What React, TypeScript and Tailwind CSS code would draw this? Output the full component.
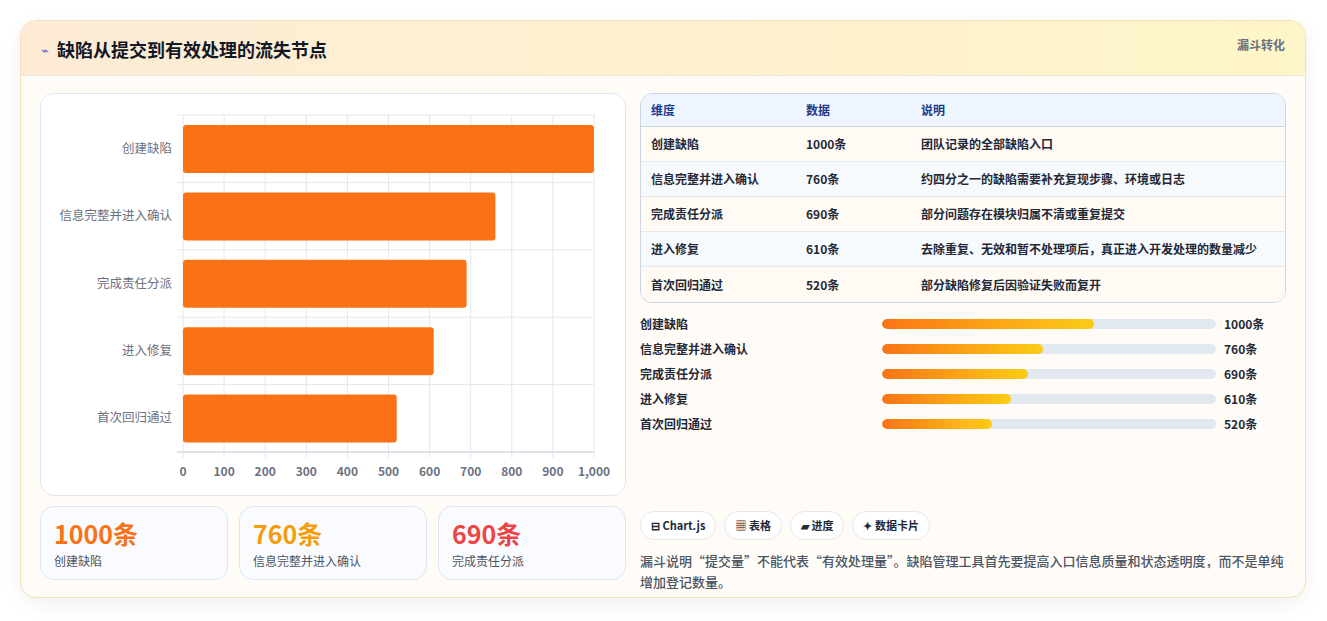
import React from 'react';

const rows = [
  { name: '创建缺陷', value: 1000, note: '团队记录的全部缺陷入口' },
  { name: '信息完整并进入确认', value: 760, note: '约四分之一的缺陷需要补充复现步骤、环境或日志' },
  { name: '完成责任分派', value: 690, note: '部分问题存在模块归属不清或重复提交' },
  { name: '进入修复', value: 610, note: '去除重复、无效和暂不处理项后，真正进入开发处理的数量减少' },
  { name: '首次回归通过', value: 520, note: '部分缺陷修复后因验证失败而复开' },
];

const font = { fontFamily: '"Noto Sans CJK SC", "Noto Sans", sans-serif' };

const Chart: React.FC = () => {
  const x0 = 142, w = 411, y0 = 21, h = 337, band = h / 5;
  return (
    <svg width="584" height="401" className="block">
      {Array.from({ length: 11 }).map((_, i) => (
        <g key={i}>
          <line x1={x0 + (w * i) / 10} x2={x0 + (w * i) / 10} y1={y0} y2={y0 + h + 6} stroke="#e5e7eb" />
          <text x={x0 + (w * i) / 10} y={382} textAnchor="middle" fontSize="12" fontWeight="600" fill="#6b7280">
            {i === 10 ? '1,000' : i * 100}
          </text>
        </g>
      ))}
      {Array.from({ length: 6 }).map((_, i) => (
        <line key={i} x1={x0 - 6} x2={x0 + w} y1={y0 + band * i} y2={y0 + band * i} stroke="#e5e7eb" />
      ))}
      <line x1={x0 - 6} x2={x0 + w} y1={y0 + h} y2={y0 + h} stroke="#cbd5e1" />
      {rows.map((r, i) => (
        <g key={r.name}>
          <rect x={x0} y={y0 + band * i + 10} width={(w * r.value) / 1000} height={48} rx="3" fill="#f97316" />
          <text x={131} y={y0 + band * i + band / 2 + 4} textAnchor="end" fontSize="12.5" fill="#6b7280">
            {r.name}
          </text>
        </g>
      ))}
    </svg>
  );
};

const App: React.FC = () => (
  <div className="w-[1327px] h-[621px] bg-white pt-[20px] pl-[20px]" style={font}>
    <div className="w-[1286px] h-[578px] rounded-[16px] border border-[#f6dfbd] bg-[#fffcf8] shadow-[0_6px_20px_rgba(0,0,0,0.06)] overflow-hidden flex flex-col">
      <div className="h-[55px] shrink-0 flex items-start justify-between px-[20px] bg-gradient-to-r from-[#fdebd6] to-[#fef5c8] border-b border-[#f0e6d8]">
        <div className="flex items-center gap-[8px] mt-[15px]">
          <span className="text-[#4f6bd8] text-[13px]">⌁</span>
          <span className="text-[18px] font-bold text-[#111827]">缺陷从提交到有效处理的流失节点</span>
        </div>
        <span className="mt-[15px] text-[12px] font-semibold text-[#6b7280]">漏斗转化</span>
      </div>
      <div className="flex gap-[14px] px-[19px] pt-[17px]">
        <div className="w-[586px] flex flex-col gap-[10px]">
          <div className="h-[403px] rounded-[14px] border border-[#e2e8f0] bg-white">
            <Chart />
          </div>
          <div className="grid grid-cols-3 gap-[11px]">
            {[
              ['1000条', '创建缺陷', 'text-[#f97316]'],
              ['760条', '信息完整并进入确认', 'text-[#f59e0b]'],
              ['690条', '完成责任分派', 'text-[#ef4444]'],
            ].map(([v, l, c]) => (
              <div key={l} className="h-[74px] rounded-[14px] border border-[#dbe7f5] bg-[#f9fbfe] px-[13px] pt-[10px]">
                <div className={`text-[25px] font-bold leading-[32px] ${c}`}>{v}</div>
                <div className="text-[12px] text-[#4b5563] mt-[3px]">{l}</div>
              </div>
            ))}
          </div>
        </div>
        <div className="w-[647px] flex flex-col">
          <div className="rounded-[12px] border border-[#cbd5e1] overflow-hidden text-[12px] font-semibold text-[#1f2937]">
            <div className="h-[33px] flex items-center bg-[#eef5ff] border-b border-[#cbd5e1] text-[#1e3a8a] px-[10px]">
              <span className="w-[155px]">维度</span>
              <span className="w-[115px]">数据</span>
              <span>说明</span>
            </div>
            {rows.map((r, i) => (
              <div key={r.name} className={`h-[35px] flex items-center px-[10px] ${i % 2 ? 'bg-[#f7fafd]' : 'bg-[#fffaf3]'} ${i < 4 ? 'border-b border-[#e5e7eb]' : ''}`}>
                <span className="w-[155px]">{r.name}</span>
                <span className="w-[115px]">{r.value}条</span>
                <span>{r.note}</span>
              </div>
            ))}
          </div>
          <div className="flex flex-col gap-[5px] mt-[11px]">
            {rows.map((r) => (
              <div key={r.name} className="h-[20px] flex items-center text-[12px] font-semibold text-[#1f2937]">
                <span className="w-[242px]">{r.name}</span>
                <div className="w-[334px] h-[10px] rounded-full bg-[#e2e8f0] overflow-hidden">
                  <div className="h-full rounded-full bg-gradient-to-r from-[#f97316] to-[#facc15]" style={{ width: `${r.value * 0.0635}%` }} />
                </div>
                <span className="ml-[8px]">{r.value}条</span>
              </div>
            ))}
          </div>
          <div className="flex gap-[8px] mt-[77px]">
            {['⊟ Chart.js', '▦ 表格', '▰ 进度', '✦ 数据卡片'].map((t) => (
              <span key={t} className="h-[29px] px-[10px] flex items-center rounded-full border border-[#e5e7eb] bg-white text-[11px] font-semibold text-[#1f2937]">{t}</span>
            ))}
          </div>
          <p className="mt-[10px] text-[13px] leading-[21px] text-[#4b5563] font-medium">
            漏斗说明“提交量”不能代表“有效处理量”。缺陷管理工具首先要提高入口信息质量和状态透明度，而不是单纯增加登记数量。
          </p>
        </div>
      </div>
    </div>
  </div>
);

export default App;
